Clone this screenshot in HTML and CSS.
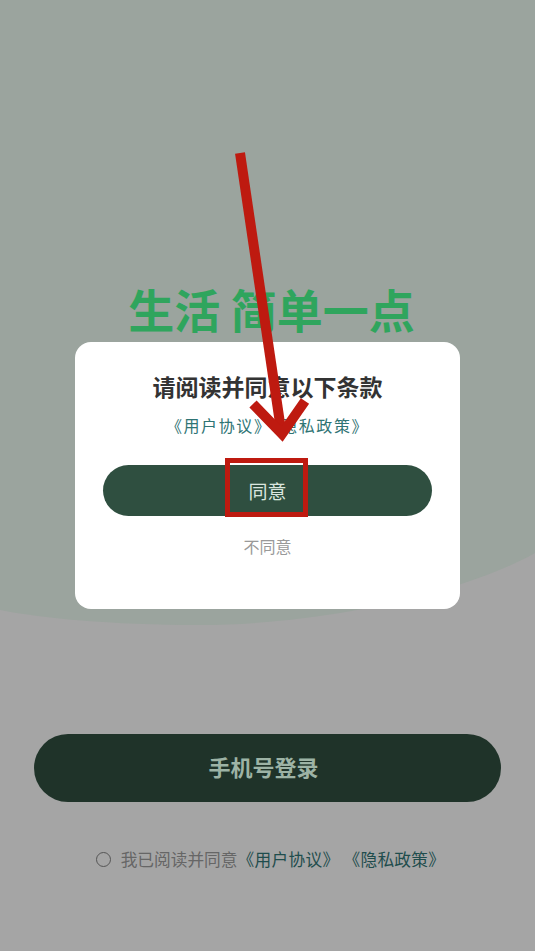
FILE: index.html
```html
<!DOCTYPE html>
<html lang="zh-CN">
<head>
	<meta charset="UTF-8">
	<title>登录</title>
	<link rel="stylesheet" href="styles.css">
</head>
<body>
	<div class="page">
		<svg class="bg" viewBox="0 0 535 951" preserveAspectRatio="none">
			<path d="M0 0 H535 V553 C470 590 330 625 200 625 C110 625 40 618 0 610 Z" fill="#9ba49e"/>
		</svg>

		<h1 class="slogan">生活 简单一点</h1>

		<div class="bottom">
			<button class="login">手机号登录</button>
			<p class="agree">
				<span class="radio"></span>
				我已阅读并同意<a href="#">《用户协议》</a><a href="#" class="second">《隐私政策》</a>
			</p>
		</div>

		<div class="mask">
			<div class="dialog">
				<h2>请阅读并同意以下条款</h2>
				<p class="links"><a href="#">《用户协议》</a><a href="#">《隐私政策》</a></p>
				<button class="ok">同意</button>
				<p class="no">不同意</p>
			</div>
		</div>

		<!-- annotation -->
		<svg class="mark" viewBox="0 0 535 951">
			<line x1="240" y1="153" x2="281" y2="430" stroke="#be1a10" stroke-width="10"/>
			<polyline points="253,404 282,434 305,401" fill="none" stroke="#be1a10" stroke-width="10"/>
			<rect x="227.5" y="460.5" width="78" height="54" fill="none" stroke="#be1a10" stroke-width="5"/>
		</svg>
	</div>
</body>
</html>
```

FILE: styles.css
```css
*{
  padding: 0;
  margin: 0;
  box-sizing: border-box;
}

body{
  font-family: "Noto Sans CJK SC", "Noto Sans", sans-serif;
  background: #a5a5a5;
}

.page{
  position: relative;
  height: 951px;
  overflow: hidden;
  display: flex;
  flex-direction: column;
  align-items: center;
  background: #a5a5a5;
}

.bg{
  position: absolute;
  left: 0;
  top: 0;
  width: 100%;
  height: 100%;
}

.slogan{
  position: relative;
  margin-top: 280px;
  margin-left: 8px;
  font-size: 46px;
  line-height: 56px;
  font-weight: 700;
  color: #2fa55d;
}

.bottom{
  position: relative;
  margin-top: auto;
  width: 100%;
  padding: 0 34px 80px;
  display: flex;
  flex-direction: column;
  align-items: center;
}

.login{
  width: 100%;
  height: 68px;
  border: none;
  border-radius: 34px;
  background: #1f3329;
  color: #9db3a5;
  font-family: inherit;
  font-size: 22px;
  font-weight: 700;
  padding-bottom: 4px;
  text-indent: -8px;
}

.agree{
  margin-top: 45px;
  margin-left: 6px;
  display: flex;
  align-items: center;
  font-size: 16.7px;
  line-height: 24px;
  color: #666;
}

.agree a{
  color: #1f4d4d;
  text-decoration: none;
  letter-spacing: 0.3px;
}

.agree .second{
  margin-left: 4px;
}

.radio{
  width: 15px;
  height: 15px;
  border: 1.5px solid #555;
  border-radius: 50%;
  margin-right: 10px;
}

.mask{
  position: absolute;
  left: 0;
  top: 0;
  width: 100%;
  height: 100%;
  display: flex;
  align-items: center;
  justify-content: center;
}

.dialog{
  width: 385px;
  height: 267px;
  padding: 28px 28px 0;
  background: #fff;
  border-radius: 16px;
  text-align: center;
}

.dialog h2{
  font-size: 23px;
  line-height: 32px;
  font-weight: 700;
  color: #333;
}

.links{
  margin-top: 11px;
  font-size: 16px;
  line-height: 24px;
  letter-spacing: 1.6px;
}

.links a{
  color: #2f7474;
  text-decoration: none;
}

.ok{
  margin-top: 28px;
  width: 100%;
  height: 51px;
  border: none;
  border-radius: 26px;
  background: #2f4f40;
  color: #dbe6df;
  font-family: inherit;
  font-size: 19px;
}

.no{
  margin-top: 18px;
  font-size: 16px;
  line-height: 24px;
  color: #999;
}

.mark{
  position: absolute;
  left: 0;
  top: 0;
  width: 535px;
  height: 951px;
}
```
